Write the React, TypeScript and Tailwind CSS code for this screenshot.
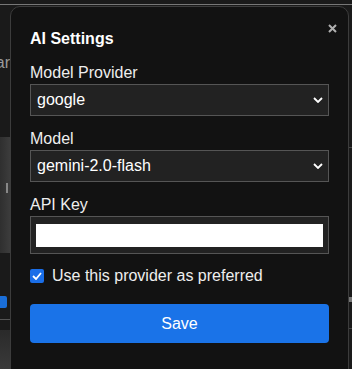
import React from 'react';

function Chevron() {
  return (
    <svg width="10" height="6" viewBox="0 0 10 6" className="shrink-0">
      <path d="M1 1 L5 5 L9 1" fill="none" stroke="#ffffff" strokeWidth="1.8" />
    </svg>
  );
}

function FakeSelect({ value }: { value: string }) {
  return (
    <div className="flex h-[32px] items-center justify-between border border-[#555] bg-[#222] pl-[6px] pr-[5px] text-[16px] leading-[18px] text-white">
      <span>{value}</span>
      <Chevron />
    </div>
  );
}

function Field({ label, children }: { label: string; children: React.ReactNode }) {
  return (
    <div className="flex flex-col gap-[2px]">
      <label className="text-[16px] leading-[18px]">{label}</label>
      {children}
    </div>
  );
}

export default function App() {
  return (
    <div className="flex h-[369px] w-[352px] flex-col overflow-hidden bg-[#1a1a1a] pt-[4px] font-['Liberation_Sans',Arial,sans-serif]">
      <div className="h-px w-full shrink-0 bg-[#777]" />
      <div className="flex min-h-0 flex-1">
        {/* page behind the dialog, left edge */}
        <div className="flex w-[10px] shrink-0 flex-col overflow-hidden">
          <div className="mt-[49px] flex justify-end text-[16px] leading-[18px] text-[#9a9a9a]">
            <span className="whitespace-nowrap">ar</span>
          </div>
          <div className="mt-[65px] flex h-[116px] flex-col bg-gradient-to-r from-[#2f2f2f] to-[#3c3c3c] pl-[6px] pt-[46px]">
            <div className="h-[10px] w-[2px] bg-[#888]" />
          </div>
          <div className="mt-[43px] h-[12px] w-[7px] rounded-r-[2px] bg-[#1a6ed8]" />
          <div className="mt-[11px] h-px bg-[#555]" />
          <div className="mt-[10px] flex-1 bg-gradient-to-b from-[#2a2a2a] to-[#3a3a3a]" />
        </div>

        {/* dialog */}
        <div className="relative mt-px h-[380px] w-[339px] shrink-0 rounded-[10px] border border-[#3c3c3c] bg-[#121212] px-[19px] pt-[23px] text-[#eee]">
          <button className="absolute right-[11px] top-[17px] flex h-[9px] w-[9px] items-center justify-center">
            <svg width="9" height="9" viewBox="0 0 9 9">
              <path d="M1 1 L8 8 M8 1 L1 8" stroke="#b0b0b0" strokeWidth="2" />
            </svg>
          </button>

          <div className="flex flex-col">
            <h2 className="text-[16px] font-bold leading-[18px] text-white">AI Settings</h2>

            <div className="mt-[16px] flex flex-col gap-[14px]">
              <Field label="Model Provider">
                <FakeSelect value="google" />
              </Field>
              <Field label="Model">
                <FakeSelect value="gemini-2.0-flash" />
              </Field>
              <Field label="API Key">
                <div className="border border-[#555] bg-[#222] px-[5px] pb-[6px] pt-[7px]">
                  <input type="password" className="block h-[23px] w-full bg-white outline-none" />
                </div>
              </Field>
            </div>

            <label className="mt-[13px] flex items-center gap-[8px] text-[16px] leading-[18px]">
              <span className="flex h-[14px] w-[14px] items-center justify-center rounded-[2px] bg-[#1a6ee8]">
                <svg width="10" height="8" viewBox="0 0 10 8">
                  <path d="M1 4 L4 7 L9 1" fill="none" stroke="#ffffff" strokeWidth="1.8" />
                </svg>
              </span>
              <span>Use this provider as preferred</span>
            </label>

            <button className="mt-[19px] flex h-[39px] w-full items-center justify-center rounded-[4px] bg-[#1a73e8] text-[16px] text-white">
              Save
            </button>
          </div>
        </div>

        {/* page behind the dialog, right edge */}
        <div className="flex flex-1 flex-col">
          <div className="mt-[142px] h-px bg-[#444]" />
          <div className="mt-[149px] h-[5px] w-[3px] self-end bg-[#777]" />
          <div className="mt-[26px] h-px bg-[#444]" />
        </div>
      </div>
    </div>
  );
}
